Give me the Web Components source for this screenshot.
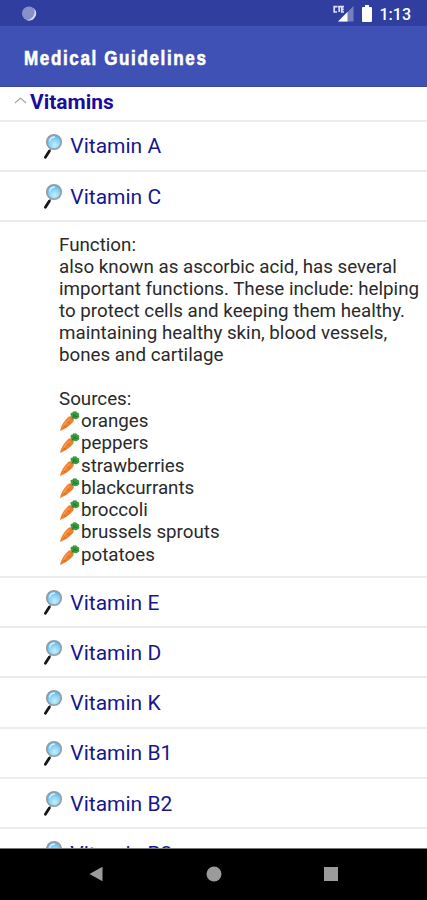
<!DOCTYPE html>
<html lang="en">
<head>
<meta charset="utf-8">
<title>Medical Guidelines</title>
<style>
  html, body {
    margin: 0;
    height: 100%;
  }

  body {
    font-family: Roboto, 'Liberation Sans', sans-serif;
    overflow: hidden;
    background: #fff;
  }
</style>
</head>
<body>
<guide-app>
  <status-bar slot="top" time="1:13"></status-bar>
  <app-bar slot="top">Medical Guidelines</app-bar>
  <guide-group label="Vitamins">
    <guide-item>Vitamin A</guide-item>
    <guide-item>Vitamin C</guide-item>
    <guide-detail
      text="also known as ascorbic acid, has several|important functions. These include: helping|to protect cells and keeping them healthy.|maintaining healthy skin, blood vessels,|bones and cartilage"
      sources="oranges,peppers,strawberries,blackcurrants,broccoli,brussels sprouts,potatoes"></guide-detail>
    <guide-item>Vitamin E</guide-item>
    <guide-item>Vitamin D</guide-item>
    <guide-item>Vitamin K</guide-item>
    <guide-item>Vitamin B1</guide-item>
    <guide-item>Vitamin B2</guide-item>
    <guide-item>Vitamin B3</guide-item>
  </guide-group>
  <nav-bar slot="bottom"></nav-bar>
</guide-app>

<script>
class GuideApp extends HTMLElement {
  constructor() {
    super();
    this.attachShadow({ mode: 'open' }).innerHTML = `
      <style>
        :host {
          display: flex;
          flex-direction: column;
          height: 900px;
        }
        main {
          flex: 1;
          min-height: 0;
          overflow: hidden;
        }
      </style>
      <slot name="top"></slot>
      <main><slot></slot></main>
      <slot name="bottom"></slot>
    `;
  }
}

class StatusBar extends HTMLElement {
  constructor() {
    super();
    this.attachShadow({ mode: 'open' }).innerHTML = `
      <style>
        :host {
          display: flex;
          align-items: center;
          box-sizing: border-box;
          height: 26px;
          flex: none;
          padding: 1px 16px 0 20px;
          background: #303f9f;
          color: #fff;
        }
        svg { display: block; }
        .signal { margin-left: auto; }
        .battery { margin: 0 8px 0 8px; }
        .time {
          font-size: 16px;
          font-weight: 500;
          line-height: 24px;
          padding-top: 2px;
        }
      </style>
      <svg width="18" height="18" viewBox="0 0 18 18">
        <circle cx="9" cy="8.5" r="7" fill="#8790c8"/>
        <path d="M13.6 3.2A7 7 0 0 1 6.5 15A8 8 0 0 0 13.6 3.2Z" fill="#d5d9ee"/>
      </svg>
      <svg class="signal" width="21" height="18" viewBox="0 0 21 18">
        <path d="M20.5 1v15.5H5z" fill="#7680c0"/>
        <path d="M14.5 7v9.5H5z" fill="#fff"/>
        <path d="M4 1.7H1.2V7H4M4.5 1.7H8M6.2 1.7V7M11 1.7H8.8V7H11M8.800 4.300h2" fill="none" stroke="#dde0f2" stroke-width="1.700"/>
      </svg>
      <svg class="battery" width="10" height="17" viewBox="0 0 10 17">
        <path d="M3 0h4v2h2q1 0 1 1v13q0 1-1 1H1q-1 0-1-1V3q0-1 1-1h2z" fill="#fff"/>
      </svg>
      <span class="time">${this.getAttribute('time')}</span>
    `;
  }
}

class AppBar extends HTMLElement {
  constructor() {
    super();
    this.attachShadow({ mode: 'open' }).innerHTML = `
      <style>
        :host {
          display: flex;
          align-items: center;
          box-sizing: border-box;
          flex: none;
          height: 61px;
          padding: 4px 24px 0;
          background: #3f51b5;
          border-bottom: 1px solid #3c479c;
          color: #fff;
          font: bold 20px 'Liberation Sans', sans-serif;
          letter-spacing: 1.9px;
          white-space: nowrap;
        }
        /* condensed title face */
        span {
          transform: scaleX(.852);
          transform-origin: left;
          -webkit-text-stroke: .6px #fff;
        }
      </style>
      <span><slot></slot></span>
    `;
  }
}

class GuideGroup extends HTMLElement {
  constructor() {
    super();
    this.attachShadow({ mode: 'open' }).innerHTML = `
      <style>
        :host { display: block; }
        header {
          display: flex;
          align-items: center;
          box-sizing: border-box;
          height: 34.5px;
          padding: 0 14px 2px;
          border-bottom: 2px solid #ececec;
          color: #1c0c9c;
          font-size: 20.95px;
          font-weight: 700;
        }
        svg { margin: 0 3px 3px 0; }
      </style>
      <header>
        <svg width="13" height="9" viewBox="0 0 13 9">
          <path d="M1 7l5.500-5L12 7" fill="none" stroke="#a6a6a6" stroke-width="1.200"/>
        </svg>
        <span>${this.getAttribute('label')}</span>
      </header>
      <slot></slot>
    `;
  }
}

class GuideItem extends HTMLElement {
  constructor() {
    super();
    this.attachShadow({ mode: 'open' }).innerHTML = `
      <style>
        :host {
          display: flex;
          align-items: center;
          box-sizing: border-box;
          height: 50.25px;
          padding-left: 43px;
          border-bottom: 2px solid #ececec;
          color: #16168f;
          font-size: 21px;
          white-space: nowrap;
        }
        svg { margin: 1px 6.3px 0 0; }
        span { padding-top: 1.5px; }
      </style>
      <svg width="21" height="27" viewBox="0 0 21 27">
        <defs>
          <radialGradient id="lens" cx=".55" cy=".7" r=".65">
            <stop offset="0" stop-color="#c4f0ff"/>
            <stop offset=".6" stop-color="#86d0f5"/>
            <stop offset="1" stop-color="#5aaee4"/>
          </radialGradient>
        </defs>
        <path d="M5.800 18.500l2.200-3.300" stroke="#8b8b8b" stroke-width="1.600"/>
        <path d="M2.400 24.300l4-6.200" stroke="#161616" stroke-width="2.800" stroke-linecap="round"/>
        <circle cx="11" cy="9" r="7.300" fill="url(#lens)" stroke="#929ea6" stroke-width="1.600"/>
        <path d="M6.500 8q1.200-4 5-4" fill="none" stroke="#d9f3ff" stroke-width="1.300" stroke-linecap="round"/>
      </svg>
      <span><slot></slot></span>
    `;
  }
}

class GuideDetail extends HTMLElement {
  constructor() {
    super();
    const lines = this.getAttribute('text').split('|');
    const sources = this.getAttribute('sources').split(',');
    this.attachShadow({ mode: 'open' }).innerHTML = `
      <style>
        :host {
          display: block;
          box-sizing: border-box;
          height: 355.75px;
          padding: 13.3px 0 0 59px;
          border-bottom: 2px solid #ececec;
          color: #2a2a2a;
          font-size: 18.76px;
          line-height: 21.95px;
          white-space: nowrap;
        }
        .sources { margin-top: 22px; }
        .source {
          display: flex;
          align-items: center;
          height: 22.25px;
        }
        svg {
          flex: none;
          margin: 0 1px 2px 0;
        }
      </style>
      <div>Function:</div>
      ${lines.map((line) => `<div>${line}</div>`).join('')}
      <div class="sources">Sources:</div>
      ${sources.map((name) => `
        <div class="source">
          <svg width="21" height="22" viewBox="0 0 21 22">
            <path d="M1 21Q2.200 14 8.500 7.700Q11.200 5 13.800 7.400Q16 9.800 13.400 12.700Q7.800 18.500 1 21Z" fill="#ee7f2f"/>
            <path d="M4.500 15.800Q6.500 12.300 10.500 8.700" fill="none" stroke="#f99a4c" stroke-width="1.500"/>
            <path d="M5 16.200l1.600 1M8.700 12l1.800 1.200" stroke="#c95c19" stroke-width=".8"/>
            <path d="M13 8.500L11.500 4.600Q11.200 2.400 13.200 2.900Q14 .5 15.600 1.500Q17.600 .4 18.200 2.700Q20.800 3 20 5.400Q21 7.500 18.900 8.200Q17.500 9.900 15.700 8.900Z" fill="#3c9c40"/>
            <path d="M13 8.300l4-4M14.500 3.800l.7 2.500M16 6.800l2.500-.5" stroke="#1f6f2a" stroke-width=".9"/>
          </svg>
          <span>${name}</span>
        </div>
      `).join('')}
    `;
  }
}

class NavBar extends HTMLElement {
  constructor() {
    super();
    this.attachShadow({ mode: 'open' }).innerHTML = `
      <style>
        :host {
          display: flex;
          align-items: center;
          justify-content: space-between;
          box-sizing: border-box;
          flex: none;
          height: 52px;
          padding: 0 88px 1px;
          background: #000;
          border-top: 1px solid #777;
        }
        svg { fill: #9b9b9b; }
      </style>
      <svg width="16" height="16" viewBox="0 0 16 16"><path d="M1.500 8L14.500 .8v14.400z"/></svg>
      <svg width="16" height="16" viewBox="0 0 16 16"><circle cx="8" cy="8" r="7.500"/></svg>
      <svg width="16" height="16" viewBox="0 0 16 16"><rect x="1" y="1" width="14" height="14"/></svg>
    `;
  }
}

customElements.define('guide-app', GuideApp);
customElements.define('status-bar', StatusBar);
customElements.define('app-bar', AppBar);
customElements.define('guide-group', GuideGroup);
customElements.define('guide-item', GuideItem);
customElements.define('guide-detail', GuideDetail);
customElements.define('nav-bar', NavBar);
</script>
</body>
</html>
